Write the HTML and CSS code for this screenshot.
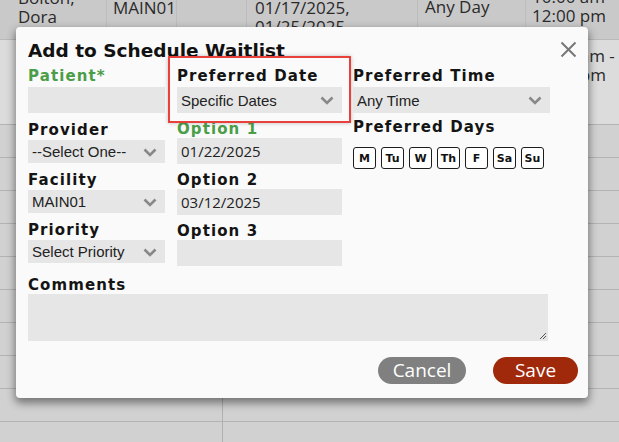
FILE: index.html
```html
<!DOCTYPE html>
<html lang="en">
<head>
<meta charset="utf-8">
<title>Add to Schedule Waitlist</title>
<link rel="stylesheet" href="styles.css">
</head>
<body>
<div class="page">
  <div class="grid-bg">
    <div class="row row-head">
      <div class="cell c-name"><span class="two">Bolton,<br>Dora</span></div>
      <div class="cell c-fac"><span>MAIN01</span></div>
      <div class="cell c-x"></div>
      <div class="cell c-dates"><span class="two dates">01/17/2025,<br>01/25/2025</span></div>
      <div class="cell c-days"><span>Any Day</span></div>
      <div class="cell c-time"><span class="two time">10:00 am<br>12:00 pm</span></div>
    </div>
    <div class="row row-sel">
      <div class="cell c-time-right"><span class="two">10:00 am -<br>12:00 pm</span></div>
    </div>
    <div class="row"></div>
    <div class="row"></div>
    <div class="row"></div>
    <div class="row"></div>
    <div class="row"></div>
    <div class="row"></div>
    <div class="row"></div>
    <div class="row"></div>
    <div class="row"><div class="split"></div></div>
    <div class="row"><div class="split"></div></div>
  </div>

  <div class="modal">
    <div class="modal-head">
      <h1 class="title">Add to Schedule Waitlist</h1>
      <svg class="close" width="17" height="17" viewBox="0 0 17 17"><path d="M1.5 1.5 L15.5 15.5 M15.5 1.5 L1.5 15.5" stroke="#777" stroke-width="2" fill="none"/></svg>
    </div>

    <div class="form">
      <div class="col col1">
        <label class="lbl green first">Patient*</label>
        <div class="field tall"></div>
        <label class="lbl">Provider</label>
        <div class="field sel">--Select One--<svg class="chev" width="14" height="9" viewBox="0 0 14 9"><polyline points="1.5,1.5 7,7 12.5,1.5" fill="none" stroke="#888" stroke-width="2.6"/></svg></div>
        <label class="lbl">Facility</label>
        <div class="field sel">MAIN01<svg class="chev" width="14" height="9" viewBox="0 0 14 9"><polyline points="1.5,1.5 7,7 12.5,1.5" fill="none" stroke="#888" stroke-width="2.6"/></svg></div>
        <label class="lbl">Priority</label>
        <div class="field sel">Select Priority<svg class="chev" width="14" height="9" viewBox="0 0 14 9"><polyline points="1.5,1.5 7,7 12.5,1.5" fill="none" stroke="#888" stroke-width="2.6"/></svg></div>
      </div>

      <div class="col col2">
        <div class="highlight">
          <label class="lbl first">Preferred Date</label>
          <div class="field sel tall">Specific Dates<svg class="chev" width="14" height="9" viewBox="0 0 14 9"><polyline points="1.5,1.5 7,7 12.5,1.5" fill="none" stroke="#888" stroke-width="2.6"/></svg></div>
        </div>
        <label class="lbl tight green">Option 1</label>
        <div class="field tall text">01/22/2025</div>
        <label class="lbl tight">Option 2</label>
        <div class="field tall text">03/12/2025</div>
        <label class="lbl tight">Option 3</label>
        <div class="field tall text"></div>
      </div>

      <div class="col col3">
        <label class="lbl first">Preferred Time</label>
        <div class="field sel tall">Any Time<svg class="chev" width="14" height="9" viewBox="0 0 14 9"><polyline points="1.5,1.5 7,7 12.5,1.5" fill="none" stroke="#888" stroke-width="2.6"/></svg></div>
        <label class="lbl days-lbl">Preferred Days</label>
        <div class="days">
          <span class="day">M</span>
          <span class="day">Tu</span>
          <span class="day">W</span>
          <span class="day">Th</span>
          <span class="day">F</span>
          <span class="day">Sa</span>
          <span class="day">Su</span>
        </div>
      </div>
    </div>

    <label class="lbl comments-lbl">Comments</label>
    <div class="comments">
      <svg class="grip" width="9" height="9" viewBox="0 0 9 9"><path d="M8 2 L2 8 M8 5 L5 8" stroke="#555" stroke-width="1" fill="none"/></svg>
    </div>

    <div class="actions">
      <button class="btn cancel">Cancel</button>
      <button class="btn save">Save</button>
    </div>
  </div>
</div>
</body>
</html>
```

FILE: styles.css
```css
* { box-sizing: border-box; }
html, body { margin: 0; padding: 0; }
body {
  width: 619px;
  height: 442px;
  overflow: hidden;
  background: #d0d0d0;
  font-family: "Open Sans", "DejaVu Sans", sans-serif;
}
.page {
  position: relative;
  width: 619px;
  height: 442px;
  overflow: hidden;
}

/* background table under overlay */
.grid-bg {
  display: flex;
  flex-direction: column;
  color: #2a2a2a;
  font-size: 17px;
  line-height: 19px;
}
.row {
  position: relative;
  display: flex;
  height: 33px;
  border-bottom: 1px solid #b3b3b3;
  background: #d1d1d1;
}
.row-head {
  height: 40px;
  background: #c9c9c9;
  border-bottom: 1px solid #b9b9b9;
}
.row-sel {
  height: 85px;
  background: #dcdcdc;
  justify-content: flex-end;
}
.cell {
  position: relative;
  border-right: 1px solid #bdbdbd;
  overflow: hidden;
}
.cell span {
  position: absolute;
  white-space: nowrap;
}
.c-name { width: 107px; }
.c-name span { left: 18px; top: -12px; }
.c-fac { width: 70px; }
.c-fac span { left: 6px; top: -2px; }
.c-x { width: 70px; }
.c-dates { width: 171px; overflow: visible; }
.c-dates span { left: 8px; top: -2px; }
.c-days { width: 108px; }
.c-days span { left: 7px; top: -3px; }
.c-time { flex: 1; border-right: 0; }
.c-time span { left: 6px; top: -13px; }
.c-time-right { width: 93px; border-right: 0; }
.c-time-right span { left: 6px; top: 6px; }
.split {
  position: absolute;
  left: 222px;
  top: 0;
  bottom: -1px;
  width: 1px;
  background: #b0b0b0;
}

/* modal */
.modal {
  position: absolute;
  left: 16px;
  top: 27px;
  width: 572px;
  height: 371px;
  background: #fafafa;
  border-radius: 4px;
  box-shadow: 0 4px 8px 1px rgba(0, 0, 0, 0.45);
  padding: 12px 10px 0 12px;
  display: flex;
  flex-direction: column;
}
.modal-head {
  display: flex;
  justify-content: space-between;
  align-items: flex-start;
  height: 28px;
}
.title {
  margin: 0;
  font-family: "DejaVu Sans", sans-serif;
  font-size: 18.5px;
  line-height: 24px;
  font-weight: 700;
  color: #111;
}
.close {
  margin: 2px 1px 0 0;
}

.form {
  display: flex;
}
.col {
  display: flex;
  flex-direction: column;
}
.col1 { width: 137px; margin-right: 12px; }
.col2 { width: 165px; margin-right: 11px; }
.col3 { width: 197px; }

.lbl {
  display: block;
  font-family: "DejaVu Sans", sans-serif;
  font-size: 15px;
  font-weight: 700;
  letter-spacing: 1.1px;
  line-height: 18px;
  height: 18px;
  color: #141414;
  margin-top: 8px;
  margin-bottom: 1px;
  white-space: nowrap;
}
.lbl.first { margin-top: 0; margin-bottom: 2px; }
.lbl.tight { margin-top: 7px; margin-bottom: 0; }
.lbl.green { color: #4b9e48; }
.lbl.days-lbl { margin-top: 5px; margin-bottom: 0; }

.field {
  position: relative;
  height: 23px;
  background: #e6e6e6;
  font-family: "Liberation Sans", Arial, sans-serif;
  font-size: 15px;
  color: #222;
  display: flex;
  align-items: center;
  padding-left: 4px;
}
.field.tall { height: 26px; }
.field.text {
  font-family: "Open Sans", sans-serif;
  font-size: 15px;
  color: #222;
}
.chev {
  position: absolute;
  right: 8px;
  top: 50%;
  margin-top: -4px;
}

.highlight {
  position: relative;
}
.highlight::after {
  content: "";
  position: absolute;
  left: -9px;
  right: -9px;
  top: -11px;
  bottom: -10px;
  border: 2px solid #e8413b;
  box-shadow: 0 0 4px rgba(0, 0, 0, 0.25);
  pointer-events: none;
}

.days {
  display: flex;
  gap: 5px;
  margin-top: 11px;
}
.day {
  width: 23px;
  height: 22px;
  border: 1.5px solid #1d1d1d;
  border-radius: 3px;
  background: #fff;
  font-family: "DejaVu Sans", sans-serif;
  font-size: 11px;
  font-weight: 700;
  color: #111;
  display: flex;
  align-items: center;
  justify-content: center;
}

.comments-lbl { margin-top: 10px; margin-bottom: 0; }
.comments {
  position: relative;
  width: 520px;
  height: 47px;
  background: #e6e6e6;
}
.grip {
  position: absolute;
  right: 1px;
  bottom: 1px;
}

.actions {
  display: flex;
  justify-content: flex-end;
  gap: 27px;
  margin-top: 16px;
}
.btn {
  height: 27px;
  border: 0;
  border-radius: 14px;
  color: #fff;
  font-family: "Open Sans", sans-serif;
  font-size: 19px;
  line-height: 27px;
  padding: 0;
}
.cancel { width: 88px; background: #808080; }
.save { width: 85px; background: #a0290b; }
```
